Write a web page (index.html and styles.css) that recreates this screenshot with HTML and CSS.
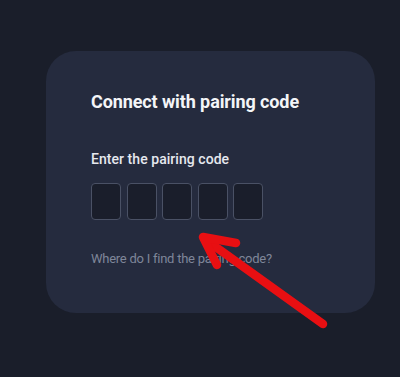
FILE: index.html
```html
<!DOCTYPE html>
<html lang="en">
<head>
<meta charset="utf-8">
<title>Connect with pairing code</title>
<link rel="stylesheet" href="styles.css">
</head>
<body>
<main class="page">
  <section class="card">
    <h1 class="title">Connect with pairing code</h1>
    <label class="label" for="c1">Enter the pairing code</label>
    <div class="code">
      <input class="digit" id="c1" maxlength="1">
      <input class="digit" maxlength="1">
      <input class="digit" maxlength="1">
      <input class="digit" maxlength="1">
      <input class="digit" maxlength="1">
    </div>
    <a class="help" href="#">Where do I find the pairing code?</a>
  </section>
  <svg class="arrow" width="400" height="377" viewBox="0 0 400 377" aria-hidden="true">
    <g stroke="#e80f12" stroke-width="8.5" stroke-linecap="round" stroke-linejoin="round" fill="none">
      <line x1="323" y1="324" x2="206" y2="240"/>
      <polyline points="236,243 203,237 217,265"/>
    </g>
  </svg>
</main>
</body>
</html>
```
FILE: styles.css
```css
html, body {
  margin: 0;
  padding: 0;
  background: #1a1e2a;
}
.page {
  position: relative;
  width: 400px;
  height: 377px;
  padding: 51px 0 0 46px;
  box-sizing: border-box;
  font-family: Roboto, "Noto Sans", sans-serif;
}
.card {
  width: 329px;
  height: 262px;
  box-sizing: border-box;
  background: #252b3e;
  border-radius: 30px;
  padding: 40px 45px 0 45px;
  display: flex;
  flex-direction: column;
  align-items: flex-start;
}
.title {
  margin: 0;
  font-size: 18px;
  font-weight: 700;
  line-height: 22px;
  color: #f4f5f8;
  letter-spacing: -0.1px;
}
.label {
  margin-top: 37px;
  font-size: 14px;
  line-height: 18px;
  font-weight: 500;
  color: #e6e8ee;
  letter-spacing: 0.05px;
}
.code {
  display: flex;
  gap: 5.5px;
  margin-top: 15px;
}
.digit {
  width: 30px;
  height: 37px;
  box-sizing: border-box;
  margin: 0;
  padding: 0;
  background: #1a1e2b;
  border: 1px solid #4a5165;
  border-radius: 4px;
  outline: none;
}
.help {
  margin-top: 30px;
  font-size: 13px;
  line-height: 17px;
  color: #7f8699;
  text-decoration: none;
  letter-spacing: -0.25px;
}
.arrow {
  position: absolute;
  left: 0;
  top: 0;
  pointer-events: none;
}
```
